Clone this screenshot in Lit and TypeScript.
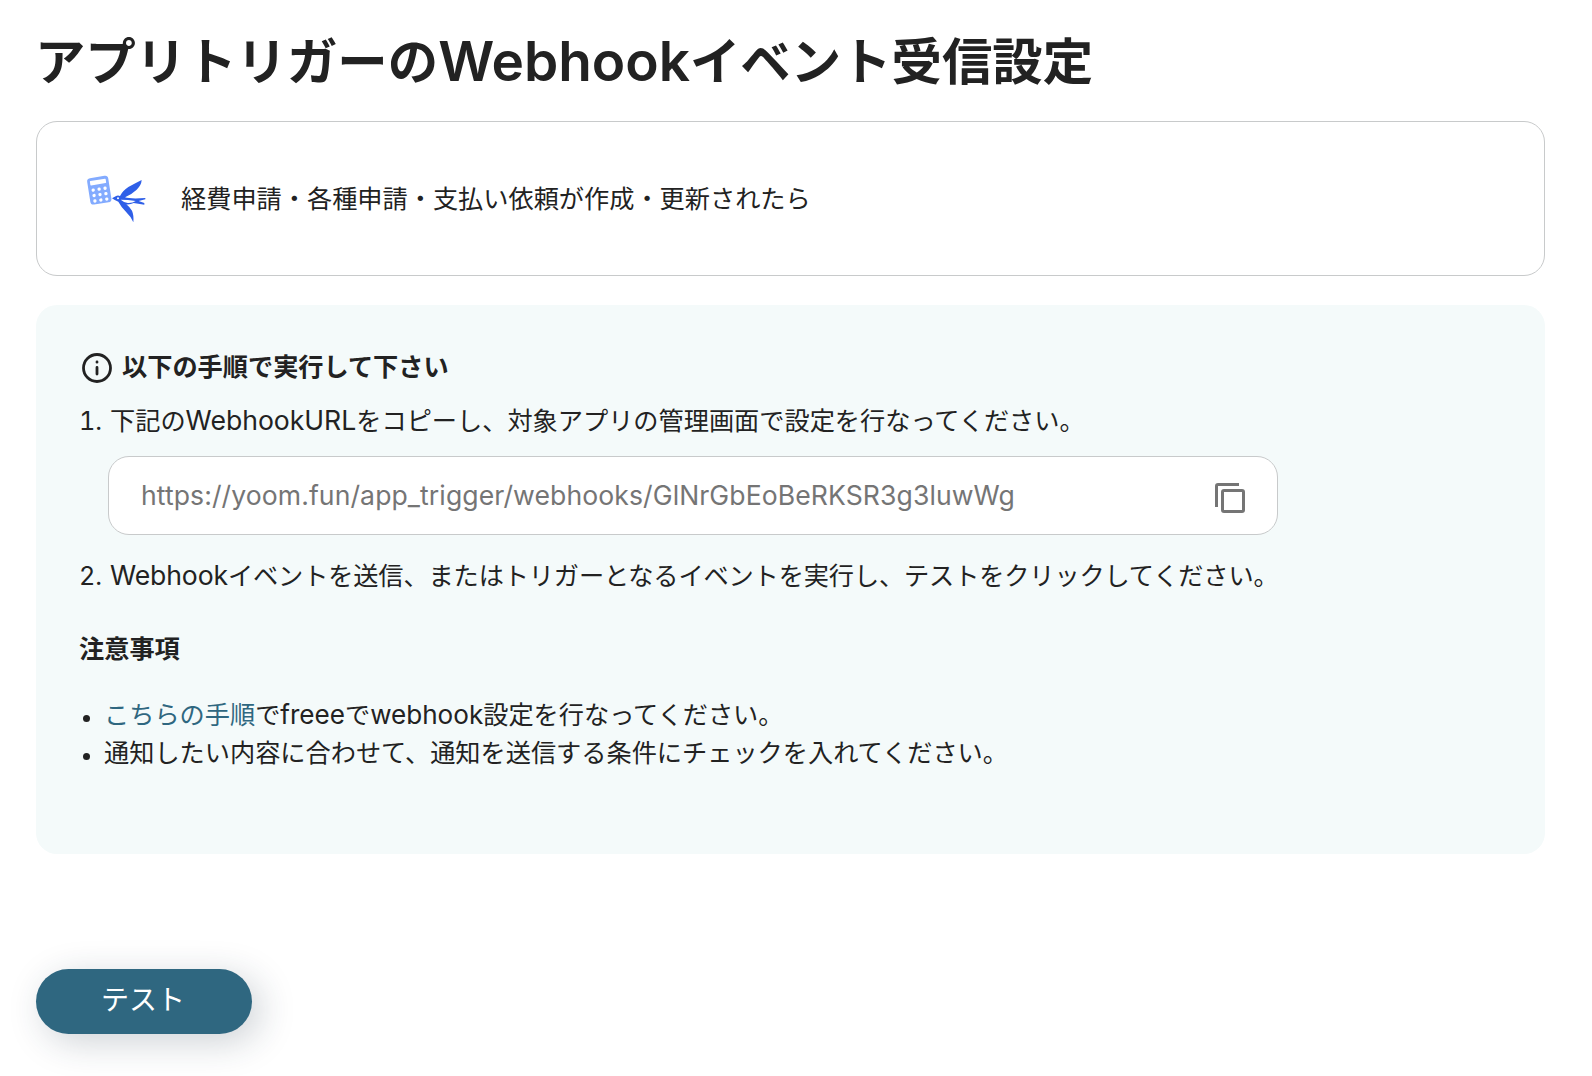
import { LitElement, html, css, svg } from "lit";
import { customElement, property, state } from "lit/decorators.js";

const fontStack = css`Inter, "Noto Sans CJK JP", sans-serif`;

@customElement("app-icon")
export class AppIcon extends LitElement {
  static styles = css`
    :host {
      display: block;
      width: 64px;
      height: 51px;
      flex: none;
    }

    svg {
      display: block;
    }

    .calculator {
      fill: #83abff;
    }

    .key {
      fill: #fff;
    }

    .bird {
      fill: #2f5fe8;
    }
  `;

  render() {
    const keys = [0, 1, 2].flatMap((row) =>
      [0, 1, 2].map((col) => ({ x: 14 + col * 18, y: 37 + row * 16.5 })),
    );

    return html`
      <svg width="64" height="51" viewBox="38 39 192 153">
        <g transform="translate(49 56) rotate(-9)">
          <rect class="calculator" width="64" height="80" rx="10" />
          <rect class="key" x="8" y="9" width="48" height="13" rx="2" />
          ${keys.map((k) => svg`<circle class="key" cx=${k.x} cy=${k.y} r="5" />`)}
        </g>
        <path
          class="bird"
          d="M125 115L136 109Q142 105 149 108Q157 92 174 81Q196 69 214 60Q213 76 199 89Q184 103 164 112Q180 117 225 114L225 118L205 123L222 129L222 134Q202 131 190 129Q180 134 168 133Q179 142 185 152Q191 166 189 187Q182 170 168 157Q153 142 144 125Q136 123 125 115Z"
        />
        <path class="key" d="M151 119Q172 119 196 123Q186 130 172 129Q160 127 151 119Z" />
        <circle class="key" cx="143" cy="115" r="3" />
      </svg>
    `;
  }
}

@customElement("copy-field")
export class CopyField extends LitElement {
  @property({ type: String })
  value = "";

  static styles = css`
    :host {
      display: flex;
      align-items: center;
      justify-content: space-between;
      box-sizing: border-box;
      height: 79px;
      padding: 0 32px 1px 32px;
      border: 1px solid #c8cacb;
      border-radius: 21px;
      background: #fff;
      color: #757575;
    }

    .value {
      font-family: ${fontStack};
      font-size: 26.6px;
      letter-spacing: 0.08px;
      line-height: 40px;
      white-space: nowrap;
    }

    .copy {
      padding: 0;
      border: none;
      background: none;
      color: inherit;
      cursor: pointer;
    }

    .copy svg {
      display: block;
      margin-top: 5px;
    }
  `;

  render() {
    return html`
      <span class="value">${this.value}</span>
      <button class="copy" aria-label="コピー" @click=${this._onCopy}>
        <svg width="30" height="30" viewBox="0 0 30 30" fill="none" stroke="currentColor" stroke-width="3">
          <path d="M1.5 24V3Q1.5 1.5 3 1.5H24" />
          <rect x="7.5" y="7.5" width="21" height="21" rx="1.5" />
        </svg>
      </button>
    `;
  }

  private _onCopy() {
    navigator.clipboard?.writeText(this.value);
  }
}

@customElement("app-root")
export class AppRoot extends LitElement {
  @state()
  private url = "https://yoom.fun/app_trigger/webhooks/GlNrGbEoBeRKSR3g3luwWg";

  static styles = css`
    :host {
      display: block;
      box-sizing: border-box;
      height: 1076px;
      padding: 32px 47px 0 36px;
      overflow: hidden;
      background: #fff;
      color: #222;
      font-family: ${fontStack};
      font-size: 25.2px;
      line-height: 38px;
    }

    .latin {
      font-size: 1.055em;
      line-height: 1;
    }

    .title {
      height: 60px;
      margin: 0 0 0 -1px;
      font-size: 50.4px;
      font-weight: 700;
      line-height: 60px;
      white-space: nowrap;
    }

    .title .latin {
      font-size: 1.09em;
      font-weight: 600;
      vertical-align: -1px;
    }

    .card {
      display: flex;
      align-items: center;
      gap: 34px;
      box-sizing: border-box;
      height: 155px;
      margin-top: 29px;
      padding: 0 46px;
      border: 1px solid #c8cacb;
      border-radius: 21px;
    }

    .guide {
      box-sizing: border-box;
      height: 549px;
      margin-top: 29px;
      padding: 43px 43px 0;
      border-radius: 21px;
      background: #f4fafa;
    }

    .guide-title {
      display: flex;
      align-items: center;
      gap: 10px;
      padding-left: 3px;
      font-weight: 700;
    }

    .guide-title svg {
      margin-top: 2px;
    }

    .step {
      display: flex;
      height: 38px;
      margin-top: 16px;
      white-space: nowrap;
    }

    .number {
      width: 31px;
      flex: none;
      font-variant-numeric: tabular-nums;
    }

    .field {
      width: 1170px;
      margin: 16px 0 0 29px;
    }

    .field + .step {
      margin-top: 22px;
      letter-spacing: -0.12px;
    }

    .notes-title {
      margin: 35px 0 0;
      font-size: inherit;
      font-weight: 700;
    }

    .notes {
      display: grid;
      margin: 28px 0 0;
      padding: 0;
      list-style: none;
    }

    .note {
      display: flex;
      align-items: center;
      height: 38px;
      white-space: nowrap;
    }

    .note .latin {
      font-size: 1.035em;
    }

    .note::before {
      content: "";
      width: 7px;
      height: 7px;
      margin: 7px 14px 0 4px;
      border-radius: 50%;
      background: #222;
    }

    .link {
      color: #2f6780;
      text-decoration: none;
    }

    .test {
      display: block;
      width: 216px;
      height: 65px;
      margin-top: 115px;
      padding: 0 2px 3px 0;
      border: none;
      border-radius: 33px;
      background: #2f6780;
      box-shadow: 8px 8px 36px rgba(32, 50, 70, 0.22);
      color: #fff;
      font: 400 28px / 40px ${fontStack};
    }
  `;

  render() {
    return html`
      <h1 class="title">アプリトリガーの<span class="latin">Webhook</span>イベント受信設定</h1>

      <section class="card">
        <app-icon></app-icon>
        <span class="card-text">経費申請・各種申請・支払い依頼が作成・更新されたら</span>
      </section>

      <section class="guide">
        <div class="guide-title">
          <svg width="30" height="30" viewBox="0 0 30 30">
            <circle cx="15" cy="15" r="13.5" fill="none" stroke="currentColor" stroke-width="2.8" />
            <path d="M15 14.5v6.5M15 9v.2" stroke="currentColor" stroke-width="2.8" stroke-linecap="round" />
          </svg>
          以下の手順で実行して下さい
        </div>

        <div class="step">
          <span class="number">1.</span>
          <span>下記の<span class="latin">WebhookURL</span>をコピーし、対象アプリの管理画面で設定を行なってください。</span>
        </div>
        <copy-field class="field" .value=${this.url}></copy-field>
        <div class="step">
          <span class="number">2.</span>
          <span><span class="latin">Webhook</span>イベントを送信、またはトリガーとなるイベントを実行し、テストをクリックしてください。</span>
        </div>

        <h2 class="notes-title">注意事項</h2>
        <ul class="notes">
          <li class="note">
            <span
              ><a class="link" href="#">こちらの手順</a>で<span class="latin">freee</span>で<span class="latin"
                >webhook</span
              >設定を行なってください。</span
            >
          </li>
          <li class="note"><span>通知したい内容に合わせて、通知を送信する条件にチェックを入れてください。</span></li>
        </ul>
      </section>

      <button class="test">テスト</button>
    `;
  }
}

declare global {
  interface HTMLElementTagNameMap {
    "app-icon": AppIcon;
    "copy-field": CopyField;
    "app-root": AppRoot;
  }
}
